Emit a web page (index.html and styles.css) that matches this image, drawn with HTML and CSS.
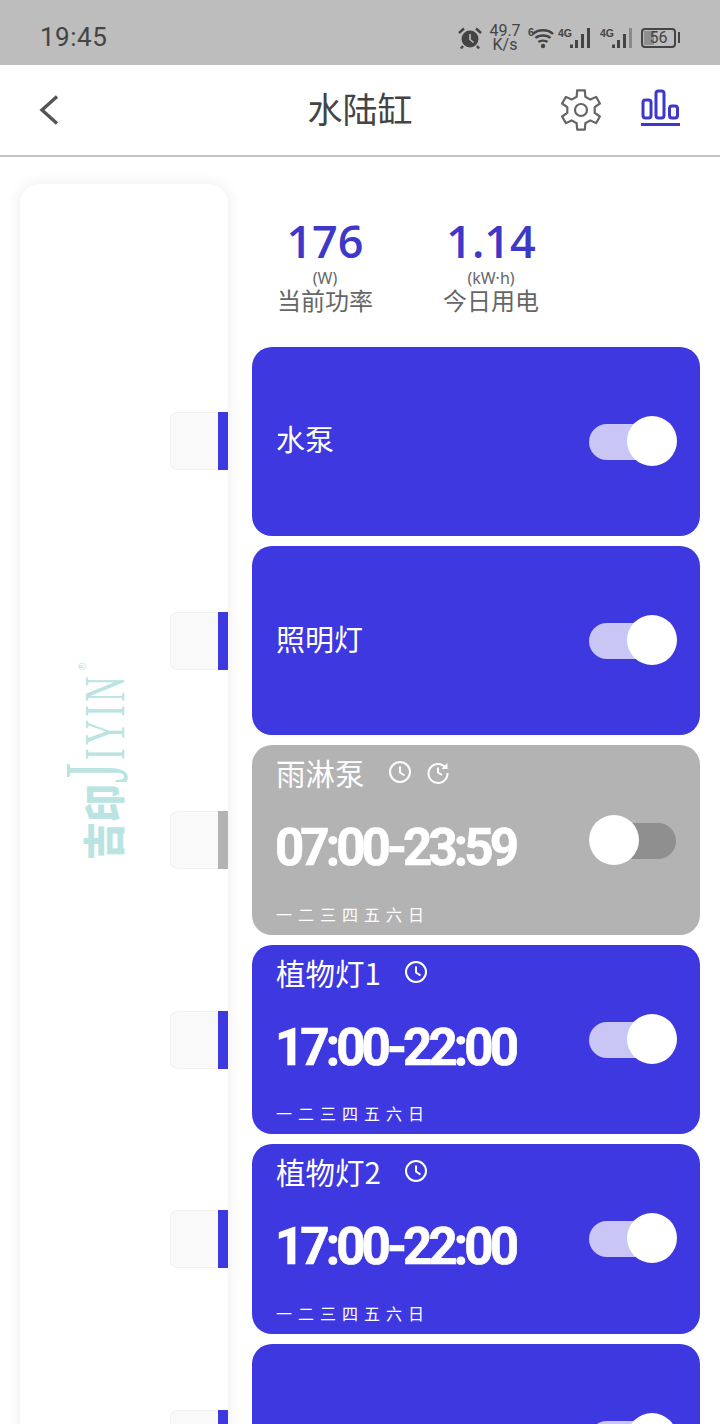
FILE: index.html
```html
<!DOCTYPE html>
<html lang="zh">
<head>
<meta charset="utf-8">
<title>水陆缸</title>
<link rel="stylesheet" href="styles.css">
</head>
<body>
<div class="page">
  <div class="statusbar">
    <span class="clock">19:45</span>
    <div class="status-icons">
      <svg class="ico-alarm" viewBox="0 0 24 22" width="24" height="22"><circle cx="12" cy="12" r="8.500" fill="#444"/><path d="M12 7v5.500l3.500 3" fill="none" stroke="#bdbdbd" stroke-width="1.600"/><path d="M1 6l5-4.500M23 6l-5-4.500M5 19l-2 2.500M19 19l2 2.500" stroke="#444" stroke-width="2.400" fill="none"/></svg>
      <div class="speed"><span>49.7</span><span>K/s</span></div>
      <svg class="ico-wifi" viewBox="0 0 26 22" width="26" height="22"><path d="M5 7c5-5 15-5 20 0M7.500 11c3.500-3.400 11.500-3.400 15 0M10.500 15c2-1.800 7-1.800 9 0" fill="none" stroke="#444" stroke-width="2.400"/><circle cx="15" cy="19" r="2.200" fill="#444"/><text x="0" y="9" class="tiny-num">6</text></svg>
      <svg class="ico-sig" viewBox="0 0 34 22" width="34" height="22"><text x="0" y="10" class="tiny">4G</text><path d="M12 17.500h3v3.500h-3zM17 13h3v8h-3zM23 7h3v14h-3zM29 1h3v20h-3z" fill="#444"/></svg>
      <svg class="ico-sig" viewBox="0 0 34 22" width="34" height="22"><text x="0" y="10" class="tiny">4G</text><path d="M12 17.500h3v3.500h-3zM17 13h3v8h-3zM23 7h3v14h-3z" fill="#444"/><path d="M29 1h3v20h-3z" fill="#8a8a8a"/></svg>
      <div class="battery"><span class="battery-body"><span class="battery-level"></span><span class="battery-num">56</span></span><span class="battery-tip"></span></div>
    </div>
  </div>

  <header class="topbar">
    <svg class="back" viewBox="0 0 22 32" width="22" height="32"><path d="M19 2.500 4 16l15 13.500" fill="none" stroke="#555" stroke-width="3.400"/></svg>
    <h1 class="title">水陆缸</h1>
    <svg class="gear" viewBox="-22 -22 44 44" width="44" height="44"><path d="M-4.330-13.310-3.820-19.630 3.820-19.630 4.330-13.310 9.360-10.410 15.090-13.120 18.910-6.510 13.690-2.900 13.690 2.900 18.910 6.510 15.090 13.120 9.360 10.410 4.330 13.310 3.820 19.630-3.820 19.630-4.330 13.310-9.360 10.410-15.090 13.120-18.910 6.510-13.690 2.900-13.690-2.900-18.910-6.510-15.090-13.120-9.360-10.410Z" fill="none" stroke="#666" stroke-width="2.200" stroke-linejoin="round"/><circle r="6" fill="none" stroke="#666" stroke-width="2.200"/></svg>
    <svg class="chart" viewBox="0 0 40 40" width="40" height="40"><g fill="none" stroke="#3d38c8" stroke-width="3"><rect x="3" y="11" width="8" height="18" rx="2.500"/><rect x="16" y="2" width="8" height="27" rx="2.500"/><rect x="29.500" y="17" width="8" height="12" rx="2.500"/></g><rect x="1" y="34" width="39" height="3" fill="#3d38c8"/></svg>
  </header>

  <main class="content">
    <aside class="panel">
      <svg class="logo" viewBox="0 0 70 210" width="70" height="210">
        <g transform="translate(0 210) rotate(-90)" fill="#b9e4e1">
          <text x="5" y="60" class="logo-cn" textLength="76" lengthAdjust="spacingAndGlyphs">吉印</text>
          <text x="82" y="67" class="logo-j" textLength="20" lengthAdjust="spacingAndGlyphs">J</text>
          <text transform="translate(105 64) scale(.6 1)" class="logo-en">IYIN</text>
          <text x="195" y="26" class="logo-r">®</text>
        </g>
      </svg>
      <div class="slot"><span class="slot-bar"></span></div>
      <div class="slot"><span class="slot-bar"></span></div>
      <div class="slot"><span class="slot-bar slot-bar-off"></span></div>
      <div class="slot"><span class="slot-bar"></span></div>
      <div class="slot"><span class="slot-bar"></span></div>
      <div class="slot"><span class="slot-bar"></span></div>
    </aside>

    <section class="column">
      <div class="stats">
        <div class="stat"><div class="stat-value">176</div><div class="stat-unit">(W)</div><div class="stat-label">当前功率</div></div>
        <div class="stat"><div class="stat-value">1.14</div><div class="stat-unit">(kW·h)</div><div class="stat-label">今日用电</div></div>
      </div>

      <div class="cards">
        <article class="card">
          <div class="card-plain">水泵</div>
          <span class="toggle"><span class="thumb"></span></span>
        </article>
        <article class="card">
          <div class="card-plain">照明灯</div>
          <span class="toggle"><span class="thumb"></span></span>
        </article>
        <article class="card card-off">
          <div class="card-main">
            <div class="card-title"><span class="card-name">雨淋泵</span>
              <svg class="mini" viewBox="0 0 24 24" width="24" height="24"><circle cx="12" cy="12" r="10" fill="none" stroke="#fff" stroke-width="2"/><path d="M12 6.500V12.500l4.500 3" fill="none" stroke="#fff" stroke-width="2"/></svg>
              <svg class="mini" viewBox="0 0 24 24" width="24" height="24"><path d="M19.800 8A9.500 9.500 0 1 0 21.500 13" fill="none" stroke="#fff" stroke-width="2"/><path d="M21.500 3v6h-6z" fill="#fff"/><path d="M12 7.500V12.500l4 2.500" fill="none" stroke="#fff" stroke-width="2"/></svg>
            </div>
            <div class="card-time">07:00-23:59</div>
            <div class="card-days"><span>一</span><span>二</span><span>三</span><span>四</span><span>五</span><span>六</span><span>日</span></div>
          </div>
          <span class="toggle toggle-off"><span class="thumb"></span></span>
        </article>
        <article class="card">
          <div class="card-main">
            <div class="card-title"><span class="card-name">植物灯1</span>
              <svg class="mini" viewBox="0 0 24 24" width="24" height="24"><circle cx="12" cy="12" r="10" fill="none" stroke="#fff" stroke-width="2"/><path d="M12 6.500V12.500l4.500 3" fill="none" stroke="#fff" stroke-width="2"/></svg>
            </div>
            <div class="card-time">17:00-22:00</div>
            <div class="card-days"><span>一</span><span>二</span><span>三</span><span>四</span><span>五</span><span>六</span><span>日</span></div>
          </div>
          <span class="toggle"><span class="thumb"></span></span>
        </article>
        <article class="card">
          <div class="card-main">
            <div class="card-title"><span class="card-name">植物灯2</span>
              <svg class="mini" viewBox="0 0 24 24" width="24" height="24"><circle cx="12" cy="12" r="10" fill="none" stroke="#fff" stroke-width="2"/><path d="M12 6.500V12.500l4.500 3" fill="none" stroke="#fff" stroke-width="2"/></svg>
            </div>
            <div class="card-time">17:00-22:00</div>
            <div class="card-days"><span>一</span><span>二</span><span>三</span><span>四</span><span>五</span><span>六</span><span>日</span></div>
          </div>
          <span class="toggle"><span class="thumb"></span></span>
        </article>
        <article class="card">
          <div class="card-plain"></div>
          <span class="toggle"><span class="thumb"></span></span>
        </article>
      </div>
    </section>
  </main>
</div>
</body>
</html>
```

FILE: styles.css
```css
* { box-sizing: border-box; }
html, body { margin: 0; padding: 0; background: #fff; }
body { font-family: "Noto Sans CJK SC", "Noto Sans", sans-serif; color: #444; }
.page { width: 720px; height: 1424px; overflow: hidden; }

/* status bar */
.statusbar { height: 65px; background: #bdbdbd; display: flex; align-items: center; justify-content: space-between; padding: 0 40px; }
.clock { font-family: Roboto, sans-serif; font-size: 26px; color: #444; letter-spacing: 0.500px; margin-top: 8px; }
.status-icons { display: flex; align-items: center; margin-top: 10px; }
.speed { display: flex; flex-direction: column; align-items: center; font-family: Roboto, sans-serif; font-size: 16px; line-height: 14px; color: #444; width: 30px; margin: 0 8px; }
.ico-wifi { margin-right: 4px; }
.ico-sig { margin-right: 8px; }
.ico-sig + .battery { margin-left: -1px; }
.tiny { font-family: "Liberation Sans", sans-serif; font-size: 10.500px; font-weight: 700; fill: #444; }
.tiny-num { font-family: "Liberation Sans", sans-serif; font-size: 11px; font-weight: 700; fill: #444; }
.battery { display: flex; align-items: center; gap: 2px; }
.battery-body { position: relative; width: 35px; height: 20px; border: 2px solid #444; border-radius: 4px; display: flex; align-items: center; justify-content: center; overflow: hidden; }
.battery-level { position: absolute; left: 1px; top: 1px; bottom: 1px; width: 10px; background: #8f8f8f; }
.battery-num { position: relative; font-family: Roboto, sans-serif; font-size: 16px; line-height: 16px; color: #444; }
.battery-tip { width: 2px; height: 11px; background: #444; }

/* top bar */
.topbar { position: relative; height: 92px; border-bottom: 2px solid #c4c4c4; display: flex; align-items: center; padding: 0 40px 0 38px; }
.back { flex: none; }
.title { position: absolute; left: 0; right: 0; top: 18px; margin: 0; text-align: center; font-size: 35px; font-weight: 400; line-height: 50px; color: #444; }
.gear { flex: none; margin-left: auto; margin-right: 37px; }
.chart { flex: none; margin-top: -2px; }

/* layout */
.content { display: flex; align-items: flex-start; padding: 27px 20px 0; }

/* left panel */
.panel { position: relative; flex: none; width: 208px; height: 1300px; background: #fff; border-radius: 20px; box-shadow: 0 0 16px rgba(0, 0, 0, 0.08); padding-top: 228px; display: flex; flex-direction: column; align-items: flex-end; gap: 141.500px; }
.logo { position: absolute; left: 40px; top: 471px; }
.logo-cn { font-family: "Noto Sans CJK SC", sans-serif; font-size: 42px; font-weight: 900; }
.logo-j { font-family: "Liberation Serif", serif; font-size: 90px; }
.logo-en { font-family: "Liberation Serif", serif; font-size: 58px; letter-spacing: 5.500px; }
.logo-r { font-family: "Liberation Sans", sans-serif; font-size: 10px; }
.slot { flex: none; width: 58px; height: 58px; background: #f9f9f9; border: 1px solid #f1f1f1; border-right: 0; border-radius: 7px 0 0 7px; display: flex; justify-content: flex-end; }
.slot-bar { width: 10px; margin: -1px 0; background: #3d38e0; }
.slot-bar-off { background: #b3b3b3; }

/* right column */
.column { flex: none; width: 448px; margin-left: 24px; }
.stats { height: 162.600px; display: flex; gap: 36px; padding-left: 8px; padding-top: 29px; }
.stat { width: 130px; display: flex; flex-direction: column; align-items: center; }
.stat-value { font-family: "Open Sans", Roboto, sans-serif; font-size: 45px; font-weight: 600; line-height: 56px; color: #3d38c8; }
.stat-unit { font-family: "Noto Sans", sans-serif; font-size: 16px; line-height: 18px; color: #666; }
.stat-label { font-size: 24px; line-height: 26px; color: #666; }

.cards { display: flex; flex-direction: column; gap: 10px; }
.card { flex: none; height: 189.400px; background: #3d38e0; border-radius: 20px; padding: 0 24px; display: flex; align-items: center; justify-content: space-between; color: #fff; }
.card-off { background: #b3b3b3; }
.card-plain { font-size: 29px; line-height: 40px; color: #fff; margin-bottom: 6px; }
.card-main { display: flex; flex-direction: column; height: 100%; }
.card-title { display: flex; align-items: center; gap: 14px; height: 40px; margin-top: 7px; }
.card-name { font-size: 29.500px; line-height: 40px; margin-right: 9px; }
.card-time { font-family: Roboto, sans-serif; font-size: 51px; font-weight: 700; line-height: 60px; letter-spacing: -3.900px; -webkit-text-stroke: 0.700px #fff; margin-top: 26px; margin-left: -1px; white-space: nowrap; }
.card-days { display: flex; gap: 6px; font-size: 16px; line-height: 24px; margin-top: 23.500px; }

.toggle { position: relative; flex: none; width: 87px; height: 36px; margin-top: 1px; border-radius: 18px; background: #c9c5f5; }
.thumb { position: absolute; top: -8px; right: -1px; width: 50px; height: 50px; border-radius: 50%; background: #fff; }
.toggle-off { background: #8f8f8f; }
.toggle-off .thumb { right: auto; left: 0; }
```
